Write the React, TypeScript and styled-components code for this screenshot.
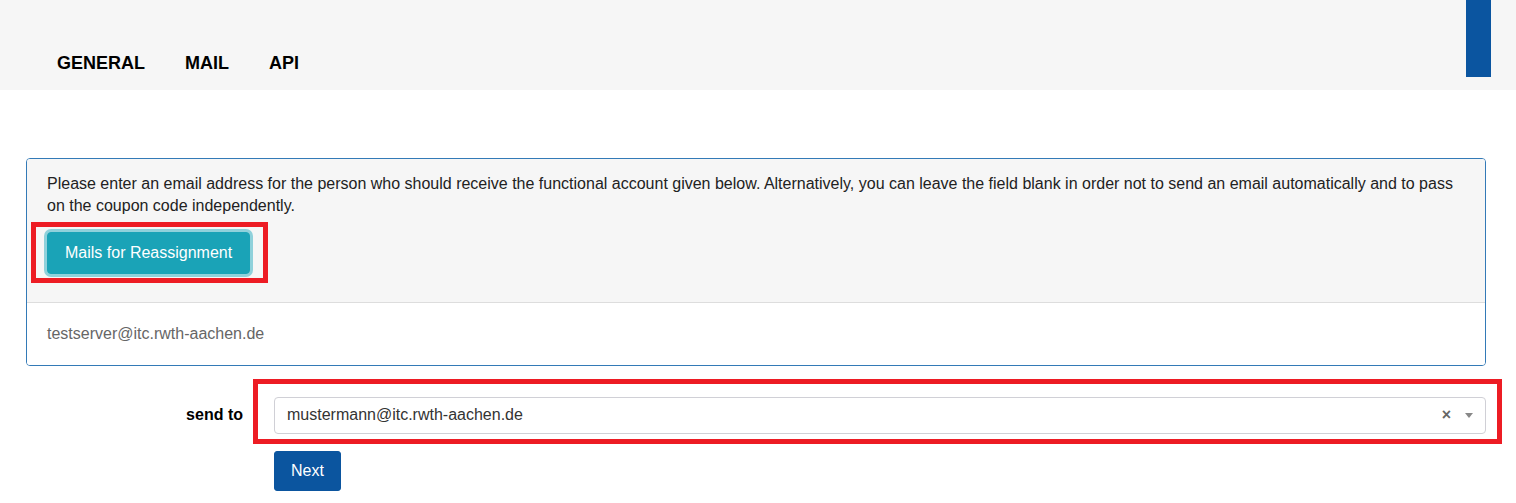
import { FunctionComponent, ReactNode } from 'react';
import styled, { createGlobalStyle } from 'styled-components';

const GlobalStyle = createGlobalStyle`
  html, body {
    margin: 0;
    padding: 0;
    background: #fff;
    font-family: "Liberation Sans", Arial, sans-serif;
    color: #333;
  }
`;

const tabs = ['GENERAL', 'MAIL', 'API'];

const Highlight: FunctionComponent<{ inset: string; children: ReactNode }> = ({ inset, children }) => (
  <Marked>
    {children}
    <RedFrame style={{ inset }} />
  </Marked>
);

export default function App() {
  return (
    <>
      <GlobalStyle />
      <Header>
        <Tabs>
          {tabs.map((tab) => (
            <Tab key={tab}>{tab}</Tab>
          ))}
        </Tabs>
        <BlueTab />
      </Header>
      <Content>
        <Panel>
          <PanelHeading>
            <Intro>
              Please enter an email address for the person who should receive the functional account given below.
              Alternatively, you can leave the field blank in order not to send an email automatically and to pass
              on the coupon code independently.
            </Intro>
            <Highlight inset="-10px -18px -9px -16px">
              <InfoButton>Mails for Reassignment</InfoButton>
            </Highlight>
          </PanelHeading>
          <PanelBody>testserver@itc.rwth-aachen.de</PanelBody>
        </Panel>
        <Form>
          <Label>send to</Label>
          <Highlight inset="-18px -16px -10px -21px">
            <Select>
              <SelectValue>mustermann@itc.rwth-aachen.de</SelectValue>
              <Clear>×</Clear>
              <Caret />
            </Select>
          </Highlight>
          <span />
          <div>
            <NextButton>Next</NextButton>
          </div>
        </Form>
      </Content>
    </>
  );
}

const Header = styled.header`
  display: flex;
  justify-content: space-between;
  height: 90px;
  background: #f6f6f6;
`;

const Tabs = styled.nav`
  display: flex;
  align-self: flex-end;
  padding: 0 0 17px 37px;
`;

const Tab = styled.a`
  padding: 0 20px;
  font-size: 18px;
  line-height: 20px;
  font-weight: 700;
  color: #000;
  cursor: pointer;
`;

const BlueTab = styled.div`
  width: 25px;
  height: 77px;
  margin-right: 25px;
  background: #0b55a0;
`;

const Content = styled.main`
  padding: 68px 30px 0 26px;
`;

const Panel = styled.section`
  border: 1px solid #337ab7;
  border-radius: 4px;
  overflow: hidden;
`;

const PanelHeading = styled.div`
  padding: 14px 20px 28px;
  background: #f6f6f6;
  border-bottom: 1px solid #ddd;
`;

const Intro = styled.p`
  margin: 0 0 14px;
  font-size: 16px;
  line-height: 22.4px;
  color: #222;
`;

const Marked = styled.div`
  position: relative;
  display: inline-block;
  vertical-align: top;
`;

const RedFrame = styled.span`
  position: absolute;
  border: 5px solid #ed1c24;
  pointer-events: none;
`;

const InfoButton = styled.button`
  display: block;
  padding: 8px 17px;
  font-family: inherit;
  font-size: 16px;
  line-height: 24px;
  color: #fff;
  background: #1aa3b7;
  border: 1px solid #1aa3b7;
  border-radius: 4px;
  box-shadow: 0 0 0 3px #8fd1db;
  cursor: pointer;
`;

const PanelBody = styled.div`
  padding: 19px 20px;
  font-size: 16px;
  line-height: 24px;
  color: #666;
  background: #fff;
`;

const Form = styled.form`
  display: grid;
  grid-template-columns: 217px 1fr;
  column-gap: 31px;
  row-gap: 17px;
  align-items: center;
  margin-top: 31px;

  & > ${Marked} {
    display: block;
  }
`;

const Label = styled.label`
  text-align: right;
  font-size: 16px;
  font-weight: 700;
  color: #000;
`;

const Select = styled.div`
  display: flex;
  align-items: center;
  height: 37px;
  box-sizing: border-box;
  padding: 0 12px;
  border: 1px solid #d0d0d6;
  border-radius: 4px;
  background: #fff;
`;

const SelectValue = styled.span`
  flex: 1;
  font-size: 16px;
  color: #333;
`;

const Clear = styled.span`
  font-size: 16px;
  font-weight: 700;
  color: #666;
  margin-right: 14px;
`;

const Caret = styled.span`
  width: 0;
  height: 0;
  border-left: 4px solid transparent;
  border-right: 4px solid transparent;
  border-top: 5px solid #888;
`;

const NextButton = styled.button`
  padding: 8px 16px;
  font-family: inherit;
  font-size: 16px;
  line-height: 22px;
  color: #fff;
  background: #0b559f;
  border: 1px solid #0b559f;
  border-radius: 3px;
  cursor: pointer;
`;
